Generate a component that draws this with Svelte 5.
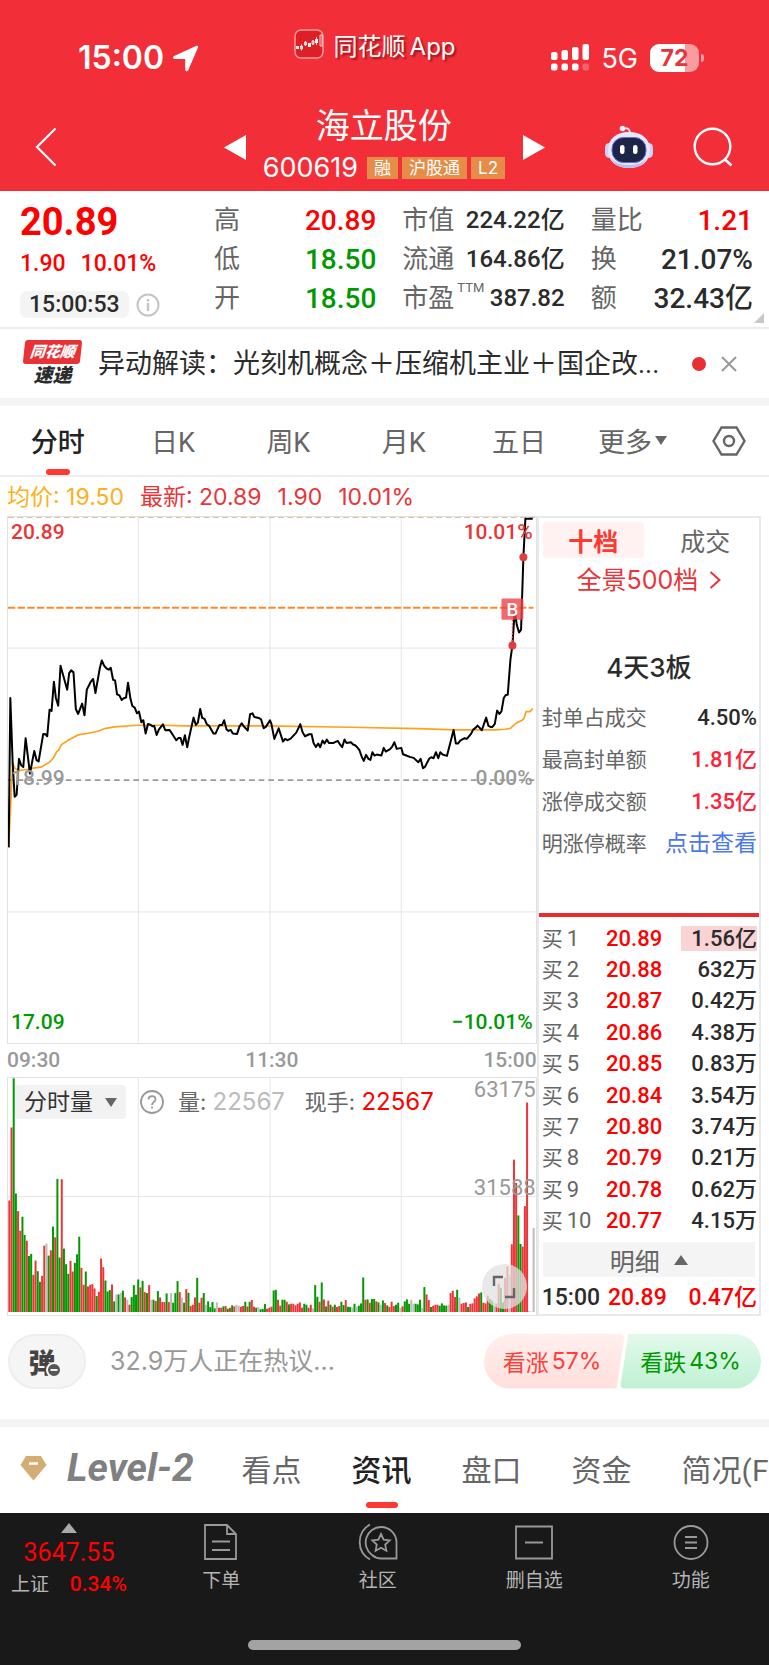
<script>
  const badges = ['融', '沪股通', 'L2'];

  const quoteCols = [
    {
      size: 'large',
      rows: [
        { label: '高', value: '20.89', tone: 'up' },
        { label: '低', value: '18.50', tone: 'down' },
        { label: '开', value: '18.50', tone: 'down' }
      ]
    },
    {
      size: 'small',
      rows: [
        { label: '市值', value: '224.22', unit: '亿' },
        { label: '流通', value: '164.86', unit: '亿' },
        { label: '市盈', sup: 'TTM', value: '387.82' }
      ]
    },
    {
      size: 'large',
      rows: [
        { label: '量比', value: '1.21', tone: 'up' },
        { label: '换', value: '21.07%' },
        { label: '额', value: '32.43', unit: '亿' }
      ]
    }
  ];

  const periods = ['分时', '日K', '周K', '月K', '五日'];
  let period = $state('分时');

  const boardStats = [
    { label: '封单占成交', value: '4.50%' },
    { label: '最高封单额', value: '1.81亿', tone: 'rise' },
    { label: '涨停成交额', value: '1.35亿', tone: 'rise' }
  ];

  const bids = [
    ['1', '20.89', '1.56亿'],
    ['2', '20.88', '632万'],
    ['3', '20.87', '0.42万'],
    ['4', '20.86', '4.38万'],
    ['5', '20.85', '0.83万'],
    ['6', '20.84', '3.54万'],
    ['7', '20.80', '3.74万'],
    ['8', '20.79', '0.21万'],
    ['9', '20.78', '0.62万'],
    ['10', '20.77', '4.15万']
  ];

  const sections = ['看点', '资讯', '盘口', '资金', '简况(F10)'];
  let section = $state('资讯');

  const priceLine =
    '26,1014 31,565 38,760 44,862 50,856 57,748 64,768 70,772 77,686 90,792 103,724 110,752 116,756 123,714 130,673 137,674 142,680 149,600 155,604 162,516 168,565 175,588 182,468 188,490 202,540 208,490 214,482 221,488 228,598 235,613 247,582 254,617 261,540 273,516 280,508 287,550 300,476 306,452 313,468 320,476 327,480 333,474 340,510 346,512 352,554 359,557 366,571 372,566 379,564 385,519 392,566 398,589 405,594 412,611 418,606 425,638 431,632 438,672 445,643 452,645 458,650 464,649 471,676 478,659 490,644 497,662 510,661 517,672 530,692 537,685 543,685 549,706 556,677 563,713 569,682 582,624 589,646 595,639 602,598 608,625 615,628 622,644 629,649 642,672 648,672 660,646 668,646 674,632 681,659 687,664 694,661 700,672 713,673 720,651 727,641 733,650 745,663 752,614 759,611 765,622 778,625 785,629 793,656 800,651 812,632 816,642 825,688 838,656 851,696 857,688 865,692 874,687 891,669 903,644 910,668 917,680 930,674 937,674 943,700 950,712 957,702 963,713 970,693 976,702 983,690 989,700 1003,700 1016,694 1022,704 1029,713 1036,690 1042,700 1055,698 1062,705 1068,707 1075,714 1081,722 1088,742 1094,754 1101,736 1108,748 1114,751 1120,728 1126,738 1133,735 1147,738 1154,715 1160,726 1173,719 1179,712 1186,698 1193,718 1207,715 1212,734 1220,737 1232,742 1244,745 1258,758 1265,748 1272,776 1278,772 1291,747 1297,743 1304,746 1311,728 1318,746 1324,728 1331,735 1344,739 1351,712 1364,661 1371,702 1377,702 1384,693 1397,686 1404,688 1417,672 1423,660 1430,655 1436,648 1442,654 1449,662 1462,624 1469,649 1475,652 1481,652 1488,643 1495,603 1502,613 1508,605 1515,565 1521,556 1527,555 1535,450 1541,407 1548,300 1554,345 1561,368 1567,360 1574,142 1580,26 1602,26';

  const averageLine =
    '26,1014 38,762 46,778 60,783 80,780 100,776 123,773 150,757 162,743 170,727 176,722 185,705 205,692 235,676 265,671 295,665 315,657 345,652 410,647 480,647 560,649 800,649 1050,653 1260,657 1370,661 1490,661 1520,659 1535,656 1553,640 1570,632 1576,626 1582,606 1594,606 1602,597';

  // one entry per minute: direction (r up, g down, k flat) and the bar's top edge
  const volume =
    'r601 r381 g233 g580 r633 r692 g650 g705 r722 g768 g762 r825 r782 g814 g846 r828 r737 k731 g767 r751 g680 r712 g536 g773 r537 g746 g793 g822 r783 r815 g789 g763 g710 r804 r855 g815 r860 r855 r853 r866 g889 r876 r776 r802 g842 g875 g871 r854 g905 k884 g884 k879 g873 r893 k900 r915 g892 g856 g885 g839 r863 g843 r877 g880 r856 k900 g900 r904 g874 r893 r907 r907 g881 r907 k880 g909 g880 g844 r877 k894 g909 r868 g879 r919 r915 r893 g834 r909 r894 g880 k915 g905 g922 g907 g926 k908 r924 r924 g920 r919 g927 r924 g917 r920 k915 k918 r921 r919 g906 r920 g906 r901 r921 g924 k922 g929 g928 g913 r927 r924 r921 g872 g870 r900 r918 g900 g900 r906 g914 r912 r912 r917 r912 r908 r924 g912 g915 r924 r915 k926 g856 g891 r906 g848 r899 g920 r903 g915 r921 g915 r922 r919 g906 g916 r901 g921 g922 k924 g912 k921 g918 g911 g833 r900 g899 r909 g898 g898 r905 g908 k915 g902 r910 g917 r922 r906 r919 g915 g909 k925 r920 g905 g899 g912 k900 k912 g912 g914 g900 k925 g862 r884 r901 g922 r918 r915 r915 g918 g911 g917 g918 k915 r880 r873 r892 g870 k893 r912 r910 r908 g922 r913 r911 r896 r890 r881 g878 r909 r911 r888 g898 g903 k910 r912 r852 g864 g908 r834 r800 k825 r733 r478 r548 g646 g732 r740 r618 r306 k934 k936 k684';

  const BASE = 937;
  const STEP = 6.57;
  const bars = volume.split(' ').map((item, i) => {
    const top = Number(item.slice(1));
    return { dir: item[0], x: 25 + i * STEP, y: top, h: BASE - top };
  });
</script>

<div class="app">
  <header>
    <div class="status">
      <div class="clock">
        15:00
        <svg width="27" height="27" viewBox="0 0 27 27"><path d="M24.500.8c1.200-.5 2 .4 1.600 1.500L16.200 25.200c-.7 1.600-3 1.200-3-.8V14H3C.9 14 .4 11.700 2.200 10.900z" fill="#fff" /></svg>
      </div>
      <div class="source">
        <svg width="30" height="30" viewBox="0 0 30 30">
          <rect x="1" y="1" width="28" height="28" rx="6" fill="#de1f26" stroke="#f79a9c" stroke-width="1.500" />
          <path d="M2 17h3v3H2zM14 14h3v4h-3zM21 10h3v4h-3z" fill="#fff" />
          <path d="M6.500 17h2v3h-2zM10.500 13h2v3h-2zM18 12h2v3h-2zM26 6h2v11h-2zM7.500 15.500v6M11.500 12v5M19 11v5M22.500 8v8" fill="none" stroke="#fff" stroke-width=".8" />
        </svg>
        <span>同花顺<b>App</b></span>
      </div>
      <div class="signal">
        <svg width="38" height="28" viewBox="0 0 38 28" fill="#fff">
          <rect x="0" y="8" width="6.500" height="8" rx="2" /><rect x="10.500" y="6" width="6.500" height="10" rx="2" />
          <rect x="21" y="3" width="6.500" height="13" rx="2" /><rect x="31.500" y="0" width="6.500" height="16" rx="2" />
          <rect x="0" y="19.500" width="6.500" height="7" rx="2" /><rect x="10.500" y="19.500" width="6.500" height="7" rx="2" />
          <rect x="21" y="19.500" width="6.500" height="7" rx="2" /><rect x="31.500" y="19.500" width="6.500" height="7" rx="2" opacity=".25" />
        </svg>
        <span>5G</span>
        <div class="battery">72</div>
      </div>
    </div>

    <div class="titlebar">
      <button class="back" aria-label="返回">
        <svg width="22" height="40" viewBox="0 0 22 40"><path d="M20.500 1.500 2 20l18.500 18.500" fill="none" stroke="#fff" stroke-width="2.200" /></svg>
      </button>
      <button aria-label="上一只">
        <svg width="22" height="25" viewBox="0 0 22 25"><path d="M22 0v25L0 12.500z" fill="#fff" /></svg>
      </button>
      <div class="stock">
        <h1>海立股份</h1>
        <div class="code">
          <span>600619</span>
          {#each badges as badge}
            <i>{badge}</i>
          {/each}
        </div>
      </div>
      <button aria-label="下一只">
        <svg width="22" height="25" viewBox="0 0 22 25"><path d="M0 0v25l22-12.500z" fill="#fff" /></svg>
      </button>
      <button class="robot" aria-label="智能助手">
        <svg width="48" height="44" viewBox="0 0 48 44">
          <path d="M18 3.500c4-1 7 0 7 5" fill="none" stroke="#dfe2fa" stroke-width="2" />
          <circle cx="17.500" cy="3.500" r="2.800" fill="#eef0ff" />
          <rect x="0" y="18" width="9" height="15" rx="4.500" fill="#cdd2f4" />
          <rect x="39" y="18" width="9" height="15" rx="4.500" fill="#cdd2f4" />
          <path d="M24 7C37 7 45 14 45 25s-8 18-21 18S3 36 3 25 11 7 24 7z" fill="#e6e8fb" />
          <path d="M6 33c3 7 10 10 18 10s15-3 18-10c-4 5-10 7-18 7S10 38 6 33z" fill="#b9bff0" />
          <rect x="7" y="12.500" width="34" height="25" rx="11.500" fill="#1d2547" stroke="#6a6be0" stroke-width="1" />
          <rect x="15" y="20" width="4.500" height="9" rx="2.200" fill="#fff" /><rect x="28" y="20" width="4.500" height="9" rx="2.200" fill="#fff" />
        </svg>
      </button>
      <button class="search" aria-label="搜索">
        <svg width="40" height="40" viewBox="0 0 40 40"><circle cx="19.500" cy="19.500" r="17.800" fill="none" stroke="#fff" stroke-width="2.400" /><path d="m31.500 32 7 6.500" stroke="#fff" stroke-width="2.600" /></svg>
      </button>
    </div>
  </header>

  <section class="quote">
    <div class="last">
      <strong>20.89</strong>
      <div class="change"><span>1.90</span><span>10.01%</span></div>
      <div class="time">
        <time>15:00:53</time>
        <svg width="24" height="24" viewBox="0 0 24 24"><circle cx="12" cy="12" r="10.500" fill="none" stroke="#c4c4c4" stroke-width="2" /><path d="M12 6v2.500M12 10v8" stroke="#c4c4c4" stroke-width="2.400" /></svg>
      </div>
    </div>
    {#each quoteCols as col}
      <dl class={col.size}>
        {#each col.rows as row}
          <div>
            <dt>{row.label}{#if row.sup}<sup>{row.sup}</sup>{/if}</dt>
            <dd class={row.tone}>{row.value}{#if row.unit}<em>{row.unit}</em>{/if}</dd>
          </div>
        {/each}
      </dl>
    {/each}
    <span class="corner"></span>
  </section>

  <section class="news">
    <div class="express">
      <b>同花顺</b>
      <strong>速递</strong>
    </div>
    <a href="#news">异动解读：光刻机概念＋压缩机主业＋国企改...</a>
    <span class="dot"></span>
    <button aria-label="关闭">
      <svg width="16" height="16" viewBox="0 0 16 16"><path d="m1 1 14 14M15 1 1 15" stroke="#999" stroke-width="2" /></svg>
    </button>
  </section>

  <nav class="periods">
    {#each periods as p}
      <button class:active={period === p} onclick={() => (period = p)}>{p}</button>
    {/each}
    <button class="more">更多<svg width="12" height="9" viewBox="0 0 12 9"><path d="M0 0h12L6 9z" fill="#666" /></svg></button>
    <button class="more" aria-label="设置">
      <svg width="34" height="30" viewBox="0 0 34 30" fill="none" stroke="#666" stroke-width="2.400"><path d="M9.500 1.500h15L32.500 15l-8 13.500h-15L1.500 15z" /><circle cx="17" cy="15" r="5" /></svg>
    </button>
  </nav>

  <p class="legend">
    <span class="avg">均价: 19.50</span>
    <span>最新: 20.89</span>
    <span>1.90</span>
    <span>10.01%</span>
  </p>

  <main>
    <div class="charts">
      <div class="price">
        <svg viewBox="24 21 1587 1581" preserveAspectRatio="none" fill="none">
          <path d="M416 21v1581M812 21v1581M1207 21v1581M24 415h1587M24 1208h1587" stroke="#e6e6e6" stroke-width="3" />
          <path d="M24 22.500h1587" stroke="#d9c49a" stroke-width="3" stroke-dasharray="18 10" />
          <path d="M24 294h1580" stroke="#ff8a24" stroke-width="6" stroke-dasharray="22 7" />
          <path d="M24 812h1587" stroke="#9a9a9a" stroke-width="5" stroke-dasharray="17 12" />
          <polyline points={averageLine} stroke="#ffa21a" stroke-width="5" />
          <polyline points={priceLine} stroke="#000" stroke-width="6" stroke-linejoin="round" />
          <rect x="1508" y="266" width="66" height="64" rx="4" fill="#ec4347" opacity=".8" />
          <text x="1541" y="318" text-anchor="middle" font-size="56" fill="#fff">B</text>
          <path d="M1541 330v70" stroke="#ec4347" stroke-width="4" stroke-dasharray="5 5" />
          <circle cx="1541" cy="407" r="12" fill="#e23b40" />
          <circle cx="1574" cy="142" r="12" fill="#e23b40" />
        </svg>
        <span class="tl">20.89</span>
        <span class="tr">10.01%</span>
        <span class="ml">18.99</span>
        <span class="mr">0.00%</span>
        <span class="bl">17.09</span>
        <span class="br">−10.01%</span>
      </div>
      <div class="hours"><span>09:30</span><span>11:30</span><span>15:00</span></div>
      <div class="volume">
        <svg viewBox="24 232 1587 714" preserveAspectRatio="none">
          <path d="M416 232v714M812 232v714M1207 232v714M24 589h1587" stroke="#e6e6e6" stroke-width="3" />
          {#each bars as bar}
            <rect class={bar.dir} x={bar.x} y={bar.y} width="6" height={bar.h} />
          {/each}
        </svg>
        <div class="indicator">
          <button class="kind">分时量<svg width="12" height="9" viewBox="0 0 12 9"><path d="M0 0h12L6 9z" fill="#666" /></svg></button>
          <svg width="24" height="24" viewBox="0 0 24 24" fill="none" stroke="#999" stroke-width="1.800"><circle cx="12" cy="12" r="11" /><path d="M8.500 9.500c0-4.500 7-4.500 7 0 0 2.500-3.500 2.500-3.500 5.500M12 16.500v2" /></svg>
          <span class="vol">量: <i>22567</i></span>
          <span>现手: <b>22567</b></span>
        </div>
        <span class="max">63175</span>
        <span class="mid">31588</span>
        <button class="expand" aria-label="全屏">
          <svg width="24" height="24" viewBox="0 0 24 24" fill="none" stroke="#666" stroke-width="2.400"><path d="M2 11V2h9M22 13v9h-9" /></svg>
        </button>
      </div>
    </div>

    <aside>
      <div class="levels">
        <button class="on">十档</button>
        <button class="deals">成交</button>
      </div>
      <a class="panorama" href="#depth">全景500档<svg width="12" height="18" viewBox="0 0 12 18"><path d="m1.500 1 9 8-9 8" fill="none" stroke="#ea3437" stroke-width="2" /></svg></a>
      <h2>4天3板</h2>
      <dl class="board">
        {#each boardStats as row}
          <div><dt>{row.label}</dt><dd class={row.tone}>{row.value}</dd></div>
        {/each}
        <div><dt>明涨停概率</dt><dd><a href="#odds">点击查看</a></dd></div>
      </dl>
      <table>
        <tbody>
          {#each bids as [level, price, amount], i}
            <tr>
              <th scope="row">买<span>{level}</span></th>
              <td class="up">{price}</td>
              <td class:hot={i === 0}><span>{amount}</span></td>
            </tr>
          {/each}
        </tbody>
      </table>
      <button class="detail">明细<svg width="14" height="10" viewBox="0 0 14 10"><path d="M7 0l7 10H0z" fill="#666" /></svg></button>
      <div class="trade"><span>15:00</span><span class="up">20.89</span><span class="up">0.47亿</span></div>
    </aside>
  </main>

  <section class="talk">
    <button class="bullet" aria-label="弹幕">
      弹
      <svg width="16" height="16" viewBox="0 0 16 16"><circle cx="8" cy="8" r="7" fill="#555" stroke="#f5f5f5" stroke-width="2" /><path d="M4.500 8h7" stroke="#fff" stroke-width="1.800" /></svg>
    </button>
    <input aria-label="评论" placeholder="32.9万人正在热议..." />
    <button class="bull">看涨<span>57%</span></button>
    <button class="bear">看跌<span>43%</span></button>
  </section>

  <nav class="sections">
    <svg width="27" height="26" viewBox="0 0 27 26"><path d="M6 1h15l5.500 9L13.500 25.500.500 10z" fill="#d4ad74" /><path d="M9 8.500h9" stroke="#fff" stroke-width="2.400" /></svg>
    <button class="level">Level-2</button>
    {#each sections as s}
      <button class:active={section === s} onclick={() => (section = s)}>{s}</button>
    {/each}
  </nav>

  <footer>
    <div class="tools">
      <button class="index">
        <svg width="16" height="10" viewBox="0 0 16 10"><path d="M8 0l8 10H0z" fill="#aaa" /></svg>
        <strong>3647.55</strong>
        <span>上证 <b>0.34%</b></span>
      </button>
      <button>
        <svg width="38" height="38" viewBox="0 0 38 38"><path d="M3 2h22l9 9v25H3zM25 2v9h9M10 18.500h18M10 27h18" /></svg>
        下单
      </button>
      <button>
        <svg width="42" height="38" viewBox="0 0 42 38"><path d="M24 4a15.500 15.500 0 0 0-9 28q4 3.500 9 3.500h15.500V19A15.500 15.500 0 0 0 24 4zM13 1.500a20 20 0 0 0 0 35M24 11l2.600 5.600 6.100.8-4.500 4.200 1.200 6.100-5.400-3-5.400 3 1.200-6.100-4.500-4.200 6.100-.8z" /></svg>
        社区
      </button>
      <button>
        <svg width="38" height="38" viewBox="0 0 38 38"><path d="M1 3.500h36v32H1zM10 19.500h18" /></svg>
        删自选
      </button>
      <button>
        <svg width="38" height="38" viewBox="0 0 38 38"><circle cx="19" cy="19.500" r="16.500" /><path d="M13 14h12M13 19.500h12M13 25h12" /></svg>
        功能
      </button>
    </div>
    <div class="home"></div>
  </footer>
</div>

<style>
  :global(body) {
    margin: 0;
  }

  * {
    box-sizing: border-box;
  }

  .app {
    font-family: Roboto, 'Noto Sans CJK SC', sans-serif;
    color: #2b2b2b;
    background: #fff;
    overflow: hidden;
  }

  button {
    display: flex;
    align-items: center;
    justify-content: center;
    padding: 0;
    border: 0;
    background: none;
    font: inherit;
    color: inherit;
    white-space: nowrap;
  }

  a {
    color: inherit;
    text-decoration: none;
  }

  i,
  em {
    font-style: normal;
  }

  dl,
  dd,
  h1,
  h2,
  p {
    margin: 0;
  }

  svg {
    display: block;
    flex-shrink: 0;
  }

  .up {
    color: #fe0000;
  }

  .down {
    color: #009900;
  }

  header {
    height: 191px;
    color: #fff;
    background: #f22f38;
    font-family: Inter, 'Noto Sans CJK SC', sans-serif;
  }

  .status {
    display: grid;
    grid-template-columns: 42% 1fr auto;
    height: 106px;
    padding: 29px 70px 0 0;
  }

  .clock {
    display: flex;
    gap: 8px;
    padding-left: 78px;
    font-size: 32px;
    font-weight: 600;
    line-height: 58px;
    align-items: center;
    height: 58px;
  }

  .source {
    display: flex;
    gap: 10px;
    align-items: center;
    height: 30px;
    font-size: 24px;
    text-shadow: 2px 2px 2px rgba(100, 0, 0, 0.6);
  }

  .source b {
    margin-left: 4px;
    font-weight: 400;
  }

  .signal {
    display: flex;
    gap: 12px;
    align-items: center;
    height: 58px;
    font-size: 27px;
  }

  .battery {
    position: relative;
    width: 49px;
    height: 28px;
    border-radius: 9px;
    background: linear-gradient(90deg, #fff 72%, #f99ca0 72%);
    color: #e8333b;
    font-size: 23px;
    font-weight: 700;
    line-height: 28px;
    text-align: center;
  }

  .battery::after {
    content: '';
    position: absolute;
    left: 51px;
    top: 10px;
    width: 3px;
    height: 8px;
    border-radius: 0 3px 3px 0;
    background: #f99ca0;
  }

  .titlebar {
    display: flex;
    align-items: center;
    height: 82px;
    padding: 0 36px 0 35px;
  }

  .back {
    margin-right: auto;
  }

  .stock {
    margin: 0 18px 0 17px;
  }

  h1 {
    font-size: 34px;
    font-weight: 400;
    line-height: 42px;
    text-align: center;
  }

  .code {
    display: flex;
    align-items: center;
    gap: 4px;
    font-size: 27px;
    line-height: 42px;
  }

  .code span {
    margin-right: 5px;
  }

  .code i {
    padding: 0 7px;
    font-size: 17px;
    line-height: 22px;
    background: #e58d48;
  }

  .robot {
    margin-left: 60px;
    margin-right: 40px;
  }

  .quote {
    position: relative;
    display: grid;
    grid-template-columns: 168px 1fr 1fr 1fr;
    column-gap: 26px;
    height: 138px;
    padding: 10px 16px 0 20px;
    border-bottom: 2px solid #ececec;
  }

  .quote dl > div {
    display: flex;
    justify-content: space-between;
    height: 39px;
    line-height: 39px;
  }

  .last strong {
    display: block;
    font-size: 38px;
    font-weight: 700;
    line-height: 42px;
    color: #fe0000;
  }

  .change {
    display: flex;
    gap: 15px;
    font-size: 23px;
    font-weight: 500;
    line-height: 42px;
    color: #fe0000;
  }

  .time {
    display: flex;
    gap: 7px;
    align-items: center;
    margin-top: 6px;
  }

  time {
    padding: 0 9px;
    border-radius: 7px;
    background: #f4f4f4;
    font-size: 23px;
    font-weight: 500;
    line-height: 27px;
  }

  dt {
    display: flex;
    font-size: 26px;
    color: #666;
  }

  dt sup {
    margin-left: 3px;
    font-size: 13px;
    line-height: 18px;
  }

  .quote dd {
    font-weight: 500;
    white-space: nowrap;
  }

  .large dd {
    font-size: 28px;
  }

  .small dd,
  .small em {
    font-size: 24px;
  }

  .corner {
    position: absolute;
    right: 5px;
    bottom: 4px;
    border: 5px solid;
    border-color: transparent #c8c8c8 #c8c8c8 transparent;
  }

  .news {
    display: flex;
    align-items: center;
    height: 77px;
    padding: 0 32px 0 24px;
    border-bottom: 8px solid #f4f4f4;
  }

  .express {
    width: 57px;
    margin-right: 17px;
    text-align: center;
    font-style: italic;
  }

  .express b {
    display: block;
    border-radius: 3px;
    background: #ea3236;
    color: #fff;
    font-size: 15px;
    font-weight: 900;
    line-height: 24px;
    transform: skewX(-6deg);
  }

  .express strong {
    display: block;
    font-size: 19px;
    font-weight: 900;
    line-height: 24px;
  }

  .news a {
    font-size: 27px;
    line-height: 40px;
    white-space: nowrap;
  }

  .dot {
    flex: none;
    width: 14px;
    height: 14px;
    margin: 0 15px 0 auto;
    border-radius: 50%;
    background: #e82f33;
  }

  .periods {
    display: grid;
    grid-template-columns: repeat(6, 15%) 1fr;
    height: 71px;
    border-bottom: 2px solid #eee;
    font-size: 27px;
    color: #666;
  }

  .periods button {
    position: relative;
    gap: 3px;
  }

  .periods .more {
    padding-right: 4px;
  }

  .periods .active,
  .sections .active {
    color: #222;
    font-weight: 500;
  }

  .periods .active::after,
  .sections .active::after {
    content: '';
    position: absolute;
    left: calc(50% - 12px);
    bottom: 0;
    width: 24px;
    height: 6px;
    border-radius: 3px;
    background: #fd3931;
  }

  .legend {
    display: flex;
    gap: 16px;
    padding-left: 7px;
    color: #ea3437;
    font-family: Inter, 'Noto Sans CJK SC', sans-serif;
    font-size: 23px;
    line-height: 40px;
    white-space: nowrap;
  }

  .avg {
    color: #fdb022;
  }

  main {
    display: grid;
    grid-template-columns: 529fr 224fr;
    margin-top: -1px;
    padding: 0 8px 0 7px;
  }

  .charts {
    min-width: 0;
    font-weight: 500;
    font-size: 21px;
    line-height: 24px;
  }

  .price,
  .volume {
    position: relative;
    border: 1px solid #e2e2e2;
  }

  .price {
    height: 528px;
  }

  .price > svg,
  .volume > svg {
    width: 100%;
    height: 100%;
  }

  .price > span,
  .max,
  .mid,
  .expand {
    position: absolute;
  }

  .price .tl,
  .price .tr {
    top: 3px;
    color: #ea3437;
  }

  .price .ml,
  .price .mr {
    top: 249px;
    color: #999;
  }

  .price .bl,
  .price .br {
    bottom: 9px;
    color: #009900;
  }

  .tl,
  .ml,
  .bl {
    left: 3px;
  }

  .tr,
  .mr,
  .br {
    right: 3px;
  }

  .hours {
    display: flex;
    justify-content: space-between;
    line-height: 33px;
    color: #999;
  }

  .volume {
    height: 239px;
  }

  .r {
    fill: #ee3437;
  }

  .g {
    fill: #009900;
  }

  .k {
    fill: #bcbcbc;
  }

  .indicator {
    position: absolute;
    left: 7px;
    top: 7px;
    display: flex;
    align-items: center;
    color: #666;
    font-family: Inter, 'Noto Sans CJK SC', sans-serif;
    font-size: 22px;
    font-weight: 400;
    white-space: nowrap;
  }

  .kind {
    gap: 12px;
    height: 34px;
    margin-right: 14px;
    padding: 0 9px;
    border-radius: 4px;
    background: #f2f2f2;
    color: #333;
    font-size: 23px;
  }

  .vol {
    margin: 0 20px 0 14px;
  }

  .vol i,
  .indicator b {
    font-size: 24px;
  }

  .vol i {
    color: #bbb;
  }

  .indicator b {
    color: #fe0000;
    font-weight: 400;
  }

  .max,
  .mid {
    right: 0;
    color: #999;
    font-weight: 400;
    font-size: 22px;
  }

  .max {
    top: 0;
  }

  .mid {
    top: 98px;
  }

  .expand {
    right: 9px;
    bottom: 6px;
    width: 45px;
    height: 45px;
    border-radius: 50%;
    background: rgba(225, 225, 225, 0.75);
  }

  aside {
    display: flex;
    flex-direction: column;
    height: 800px;
    border: 2px solid #e9e9e9;
    font-weight: 500;
  }

  .levels {
    display: grid;
    grid-template-columns: 101px 1fr;
    height: 36px;
    margin: 4px 4px 0;
    color: #666;
    font-size: 25px;
    font-weight: 400;
  }

  .on {
    border-radius: 4px;
    background: #fff2f1;
    color: #fd3931;
    font-weight: 700;
  }

  .deals {
    padding-left: 12px;
  }

  .panorama {
    display: flex;
    align-items: center;
    justify-content: center;
    gap: 11px;
    color: #ea3437;
    font-family: Inter, 'Noto Sans CJK SC', sans-serif;
    font-size: 25px;
    font-weight: 400;
    line-height: 44px;
  }

  h2 {
    margin-top: 48px;
    font-family: Inter, 'Noto Sans CJK SC', sans-serif;
    font-size: 26px;
    font-weight: 500;
    line-height: 36px;
    text-align: center;
  }

  .board {
    height: 227px;
    padding: 11px 2px 0 3px;
  }

  .board div {
    display: flex;
    justify-content: space-between;
    height: 42px;
    line-height: 42px;
    white-space: nowrap;
  }

  .board dt {
    font-size: 21px;
    font-weight: 400;
  }

  .board dd {
    font-size: 22px;
  }

  .rise {
    color: #ff2238;
  }

  .board a {
    color: #4b78ee;
    font-size: 23px;
    font-weight: 400;
  }

  table {
    width: 100%;
    height: 324px;
    border-top: 4px solid #e92b30;
    border-spacing: 0;
    padding-top: 6px;
    font-size: 22px;
    line-height: 30px;
    white-space: nowrap;
  }

  th {
    width: 29%;
    padding: 0 0 0 3px;
    color: #666;
    font-size: 21px;
    font-weight: 400;
    text-align: left;
  }

  th span {
    margin-left: 4px;
    font-size: 22px;
  }

  td {
    padding: 0 2px 0 0;
    text-align: right;
  }

  td.up {
    width: 28%;
  }

  .hot span {
    padding-left: 10px;
    background: #fad3d5;
  }

  .detail {
    gap: 14px;
    height: 35px;
    margin: auto 4px 0;
    background: #f4f4f4;
    color: #666;
    font-size: 25px;
    font-weight: 400;
  }

  .trade {
    display: flex;
    gap: 8px;
    padding: 5px 2px 0 3px;
    font-size: 23px;
    line-height: 32px;
    white-space: nowrap;
  }

  .trade span:last-child {
    margin-left: auto;
  }

  .talk {
    display: flex;
    align-items: center;
    height: 111px;
    padding: 0 8px 13px;
    border-bottom: 8px solid #f4f4f4;
    font-family: Inter, 'Noto Sans CJK SC', sans-serif;
    font-size: 23px;
  }

  .bullet {
    position: relative;
    width: 78px;
    height: 55px;
    padding-right: 10px;
    border: 2px solid #eee;
    border-radius: 28px;
    background: #f5f5f5;
    color: #444;
    font-size: 27px;
    font-weight: 900;
  }

  .bullet svg {
    position: absolute;
    right: 22px;
    bottom: 9px;
  }

  .talk input {
    flex: 1;
    min-width: 0;
    padding: 0 0 0 24px;
    border: 0;
    outline: 0;
    font: inherit;
    font-size: 25px;
  }

  .talk input::placeholder {
    color: #999;
    opacity: 1;
  }

  .bull,
  .bear {
    gap: 3px;
    width: 141px;
    height: 55px;
  }

  .bull {
    padding-right: 5px;
    border-radius: 28px 5px 5px 28px;
    background: linear-gradient(#ffefee, #ffdfdd);
    color: #fd4038;
    clip-path: polygon(0 0, 100% 0, 94% 100%, 0 100%);
  }

  .bear {
    margin-left: -5px;
    border-radius: 5px 28px 28px 5px;
    background: linear-gradient(#e3f9ec, #bff1d3);
    color: #009900;
    clip-path: polygon(6% 0, 100% 0, 100% 100%, 0 100%);
  }

  .sections {
    display: flex;
    align-items: center;
    height: 86px;
    padding: 0 0 4px 20px;
    color: #666;
    font-size: 30px;
  }

  .sections button {
    position: relative;
    flex: none;
    height: 100%;
    margin-right: 50px;
  }

  .sections .active::after {
    left: calc(50% - 16px);
    bottom: 1px;
    width: 32px;
  }

  .sections .level {
    margin-left: 20px;
    margin-right: 48px;
    color: #808080;
    font-size: 39px;
    font-style: italic;
    font-weight: 700;
  }

  footer {
    height: 153px;
    background: #191919;
    color: #b5b5b5;
  }

  .tools {
    display: grid;
    grid-template-columns: 143px repeat(4, 1fr);
    height: 127px;
    font-size: 19px;
  }

  .tools button {
    flex-direction: column;
    justify-content: flex-start;
    gap: 6px;
    padding-top: 10px;
    line-height: 28px;
  }

  .tools svg {
    fill: none;
    stroke: #999;
    stroke-width: 1.8;
  }

  .tools .index {
    gap: 3px;
    align-items: center;
    padding-right: 5px;
  }

  .index svg {
    stroke: none;
  }

  .index strong {
    color: #fe0000;
    font-size: 25px;
    font-weight: 400;
    line-height: 33px;
  }

  .index span {
    line-height: 24px;
  }

  .index b {
    margin-left: 16px;
    color: #fe0000;
    font-size: 21px;
    font-weight: 500;
  }

  .home {
    width: 273px;
    height: 10px;
    margin: 0 auto;
    border-radius: 5px;
    background: #a3a3a3;
  }
</style>
